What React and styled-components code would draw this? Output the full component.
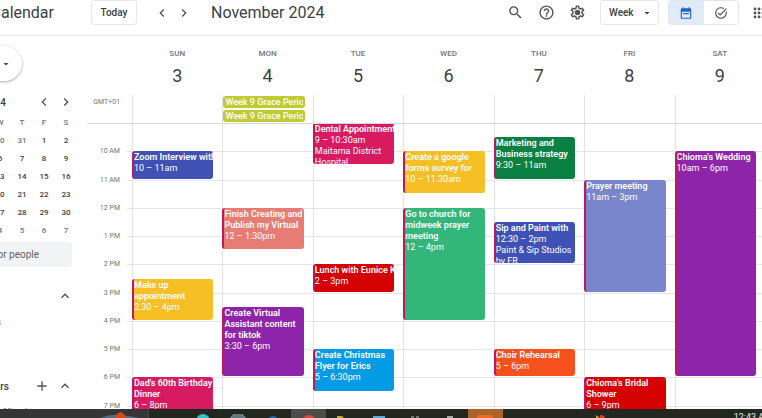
import React from "react";
import styled, { createGlobalStyle } from "styled-components";
import {
  MdAdd,
  MdArrowDropDown,
  MdChevronLeft,
  MdChevronRight,
  MdHelpOutline,
  MdKeyboardArrowUp,
  MdOutlineSettings,
  MdSearch,
  MdTaskAlt,
} from "react-icons/md";

const GlobalStyle = createGlobalStyle`
  *, *::before, *::after { box-sizing: border-box; }
  body {
    margin: 0;
    background: #fff;
    color: #3c4043;
    font-family: Roboto, "Liberation Sans", sans-serif;
    font-size: 9px;
  }
  button, input, select { font: inherit; color: inherit; }
  h1, h2, h3 { margin: 0; font-weight: 400; }
`;

const Page = styled.div`
  display: flex;
  flex-direction: column;
  height: 100vh;
  overflow: hidden;
`;

const Toolbar = styled.header`
  display: flex;
  align-items: center;
  flex: none;
  height: 36px;
  padding-bottom: 10px;
  border-bottom: 1px solid #e4e6e8;
`;

const Brand = styled.div`
  display: flex;
  justify-content: flex-end;
  flex: none;
  width: 54px;
  margin-right: 37px;
  font-size: 16px;
  line-height: 20px;
`;

const OutlineButton = styled.button`
  flex: none;
  width: 46px;
  height: 25px;
  padding: 0;
  border: 1px solid #e4e6e8;
  border-radius: 3px;
  background: #fff;
  font-size: 10px;
  font-weight: 500;
`;

const IconButton = styled.button`
  display: flex;
  align-items: center;
  justify-content: center;
  flex: none;
  width: ${(p) => p.$width || 22}px;
  height: 22px;
  padding: 0;
  border: 0;
  background: none;
  color: #50545a;
  font-size: ${(p) => p.$size || 16}px;
`;

const Pager = styled.div`
  display: flex;
  margin-left: 14px;
`;

const Month = styled.h1`
  flex: 1;
  margin-left: 16px;
  font-size: 16px;
  line-height: 20px;
  white-space: nowrap;
`;

const Tools = styled.div`
  display: flex;
  gap: 9px;
  margin-right: 12px;
`;

const SelectBox = styled.label`
  display: grid;
  grid-template-columns: 1fr 12px;
  align-items: center;
  flex: none;
  width: 59px;
  height: 25px;
  padding-right: 5px;
  border: 1px solid #e4e6e8;
  border-radius: 3px;
  font-size: 12px;

  select {
    grid-area: 1 / 1 / 2 / 3;
    height: 100%;
    padding: 0 0 0 8px;
    border: 0;
    background: none;
    appearance: none;
    font-size: 10px;
    font-weight: 500;
  }
  svg { grid-area: 1 / 2; pointer-events: none; }
`;

const Toggle = styled.div`
  display: flex;
  flex: none;
  width: 71px;
  height: 25px;
  margin: 0 14px 0 9px;
  overflow: hidden;
  border: 1px solid #e4e6e8;
  border-radius: 3px;
`;

const ToggleButton = styled.button`
  display: flex;
  align-items: center;
  justify-content: center;
  flex: 1;
  padding: 0;
  border: 0;
  background: ${(p) => (p.$active ? "#dfeafb" : "#fff")};
  color: ${(p) => (p.$active ? "#1f67c8" : "#50545a")};
  font-size: 14px;
`;

const Apps = styled(IconButton)`
  justify-content: flex-start;
  width: 9px;
  overflow: hidden;
  svg { flex: none; }
`;

const Main = styled.div`
  display: flex;
  flex: 1;
  min-height: 0;
`;

const Sidebar = styled.aside`
  display: flex;
  flex-direction: column;
  flex: none;
  align-items: flex-end;
  width: 77px;
  padding-top: 10px;
  overflow: hidden;
`;

const CreateButton = styled.button`
  display: flex;
  align-items: center;
  justify-content: flex-end;
  flex: none;
  gap: 8px;
  width: 90px;
  height: 35px;
  margin-right: 55px;
  padding: 0 10px 0 0;
  border: 0;
  border-radius: 18px;
  background: #fff;
  box-shadow: 0 1px 3px rgba(60, 64, 67, 0.45);
  font-size: 10px;
  svg { flex: none; font-size: 12px; }
`;

const MiniHeader = styled.div`
  display: flex;
  align-items: center;
  flex: none;
  height: 22px;
  margin-top: 10px;
  color: #3c4043;
  h2 { margin-right: 27px; font-size: 10px; font-weight: 500; white-space: nowrap; }
`;

const MiniMonth = styled.table`
  flex: none;
  width: 154px;
  table-layout: fixed;
  border-collapse: collapse;
  text-align: center;
  font-size: 8px;
  color: #3c4043;
  tr { height: 18px; }
  th, td { padding: 0; font-weight: 500; }
  th { color: #70757a; }
`;

const MiniDay = styled.td`
  color: ${(p) => (p.$muted ? "#70757a" : "#3c4043")};
`;

const PeopleInput = styled.input`
  flex: none;
  width: 154px;
  height: 25px;
  margin: 3px 5px 0 0;
  padding: 0 33px 0 0;
  border: 0;
  border-radius: 3px;
  background: #f1f3f4;
  text-align: right;
  font-size: 10px;
  &::placeholder { color: #5f6368; opacity: 1; }
`;

const ListHeader = styled.div`
  display: flex;
  align-items: center;
  justify-content: flex-end;
  flex: none;
  height: 24px;
  margin-top: ${(p) => p.$gap}px;
  white-space: nowrap;
  h3 { margin-right: ${(p) => p.$titleGap}px; font-size: 10px; font-weight: 500; }
`;

const ListItem = styled.label`
  display: flex;
  align-items: center;
  justify-content: flex-end;
  flex: none;
  gap: 8px;
  margin: ${(p) => p.$gap}px ${(p) => p.$end}px 0 0;
  line-height: 12px;
  font-size: 9px;
  white-space: nowrap;
  input { margin: 0; }
`;

const Week = styled.main`
  display: flex;
  flex-direction: column;
  flex: 1;
  min-width: 0;
  margin: 0 -3px 0 10px;
`;

const WeekRow = styled.div`
  display: grid;
  grid-template-columns: 45px repeat(7, minmax(0, 1fr));
  flex: none;
`;

const DayHead = styled.div`
  padding: 12px 0 8px;
  text-align: center;
  color: #70757a;
  font-size: 8px;
  line-height: 12px;
  font-weight: 500;
`;

const DayNumber = styled.div`
  margin-top: 5px;
  color: #3c4043;
  font-size: 18px;
  line-height: 22px;
  font-weight: 400;
`;

const AllDayRow = styled(WeekRow)`
  height: 29px;
  border-bottom: 1px solid #d5d7da;
`;

const Zone = styled.div`
  padding: 0 12px 0 0;
  text-align: right;
  color: #70757a;
  font-size: 7px;
  line-height: 14px;
`;

const AllDayCell = styled.div`
  display: flex;
  flex-direction: column;
  gap: 2px;
  min-width: 0;
  padding: 1px 8px 0 0;
  border-left: 1px solid #e0e2e5;
`;

const Chip = styled.button`
  flex: none;
  height: 12px;
  padding: 0 2px;
  border: 0;
  border-radius: 3px;
  background: #c0ca33;
  color: #fff;
  overflow: hidden;
  text-align: left;
  font-weight: 500;
  line-height: 12px;
  white-space: nowrap;
  span { display: block; overflow: hidden; }
`;

const Scroller = styled.div`
  flex: 1;
  min-height: 0;
  overflow: hidden;
`;

const Schedule = styled.div`
  display: grid;
  grid-template-columns: 45px repeat(7, minmax(0, 1fr));
  grid-template-rows: repeat(22, minmax(0, 1fr));
  height: 311px;
  margin-top: -1px;
`;

const HourLine = styled.div`
  grid-column: 1 / -1;
  grid-row: ${(p) => p.$row} / span 2;
  margin-left: 40px;
  border-top: 1px solid #e3e5e8;
`;

const HourLabel = styled.div`
  grid-column: 1;
  grid-row: ${(p) => p.$row} / span 2;
  margin-top: -6px;
  padding-right: 12px;
  text-align: right;
  color: #70757a;
  font-size: 7px;
  line-height: 12px;
`;

const DayColumn = styled.div`
  grid-column: ${(p) => p.$day + 2};
  grid-row: 1 / -1;
  border-left: 1px solid #e0e2e5;
`;

const Event = styled.button`
  display: flex;
  flex-direction: column;
  grid-column: ${(p) => p.$day + 2};
  grid-row: ${(p) => p.$from} / ${(p) => p.$to};
  margin: 0 9px 1px 0;
  padding: 1px 0 0;
  overflow: hidden;
  border: 0;
  border-left: 2px solid #c2185b;
  border-radius: 3px;
  background: ${(p) => p.$color};
  color: #fff;
  text-align: left;
  line-height: 11px;
  white-space: pre;
  strong { font-weight: 600; }
`;

const Taskbar = styled.footer`
  display: flex;
  flex: none;
  height: 9px;
  overflow: hidden;
  background: #22271f;
  color: #e8eaed;
`;

const TaskSearch = styled.div`
  flex: none;
  width: 149px;
  background: #343535;
  border-right: 1px solid #474a45;
  padding-left: 98px;
`;

const TaskApps = styled.div`
  display: flex;
  flex: none;
  width: 318px;
  margin-left: 36px;
`;

const TaskApp = styled.div`
  display: flex;
  justify-content: center;
  flex: 1;
  background: ${(p) => p.$bg || "transparent"};
`;

const TaskTray = styled.div`
  display: flex;
  justify-content: space-between;
  flex: 1;
  padding-left: 89px;
`;

const Clock = styled.time`
  margin-right: -10px;
  padding-top: 3px;
  line-height: 10px;
  white-space: nowrap;
`;

const days = [
  ["SUN", 3],
  ["MON", 4],
  ["TUE", 5],
  ["WED", 6],
  ["THU", 7],
  ["FRI", 8],
  ["SAT", 9],
];

const hours = ["10 AM", "11 AM", "12 PM", "1 PM", "2 PM", "3 PM", "4 PM", "5 PM", "6 PM", "7 PM"];

const weeks = [
  [27, 28, 29, 30, 31, 1, 2],
  [3, 4, 5, 6, 7, 8, 9],
  [10, 11, 12, 13, 14, 15, 16],
  [17, 18, 19, 20, 21, 22, 23],
  [24, 25, 26, 27, 28, 29, 30],
  [1, 2, 3, 4, 5, 6, 7],
];

// start and end are hours on a 24-hour clock
const events = [
  { day: 0, start: 10, end: 11, color: "#3f51b5", title: "Zoom Interview with", detail: "10 – 11am" },
  { day: 0, start: 14.5, end: 16, color: "#f6bf26", title: "Make up\nappointment", detail: "2:30 – 4pm" },
  { day: 0, start: 18, end: 20, color: "#d81b60", title: "Dad's 60th Birthday\nDinner", detail: "6 – 8pm" },
  { day: 1, start: 12, end: 13.5, color: "#e67c73", title: "Finish Creating and\nPublish my Virtual", detail: "12 – 1:30pm" },
  { day: 1, start: 15.5, end: 18, color: "#8e24aa", title: "Create Virtual\nAssistant content\nfor tiktok", detail: "3:30 – 6pm" },
  { day: 2, start: 9, end: 10.5, color: "#d81b60", title: "Dental Appointment", detail: "9 – 10:30am\nMaitama District\nHospital" },
  { day: 2, start: 14, end: 15, color: "#d50000", title: "Lunch with Eunice Kalu", detail: "2 – 3pm" },
  { day: 2, start: 17, end: 18.5, color: "#039be5", title: "Create Christmas\nFlyer for Erics", detail: "5 – 6:30pm" },
  { day: 3, start: 10, end: 11.5, color: "#f6bf26", title: "Create a google\nforms survey for", detail: "10 – 11:30am" },
  { day: 3, start: 12, end: 16, color: "#33b679", title: "Go to church for\nmidweek prayer\nmeeting", detail: "12 – 4pm" },
  { day: 4, start: 9.5, end: 11, color: "#0b8043", title: "Marketing and\nBusiness strategy", detail: "9:30 – 11am" },
  { day: 4, start: 12.5, end: 14, color: "#3f51b5", title: "Sip and Paint with", detail: "12:30 – 2pm\nPaint & Sip Studios\nby FR" },
  { day: 4, start: 17, end: 18, color: "#f4511e", title: "Choir Rehearsal", detail: "5 – 6pm" },
  { day: 5, start: 11, end: 15, color: "#7986cb", title: "Prayer meeting", detail: "11am – 3pm" },
  { day: 5, start: 18, end: 20, color: "#d50000", title: "Chioma's Bridal\nShower", detail: "6 – 9pm" },
  { day: 6, start: 10, end: 18, color: "#8e24aa", title: "Chioma's Wedding", detail: "10am – 6pm" },
];

const rowOf = (hour) => (hour - 9) * 2 + 1;

function CalendarIcon() {
  return (
    <svg width="14" height="14" viewBox="0 0 24 24" fill="currentColor" aria-hidden="true">
      <path d="M19 4h-1V2h-2v2H8V2H6v2H5a2 2 0 0 0-2 2v14a2 2 0 0 0 2 2h14a2 2 0 0 0 2-2V6a2 2 0 0 0-2-2zm0 16H5V10h14v10z" />
      <path d="M7 12h10v2H7z" />
    </svg>
  );
}

function GearIcon() {
  return (
    <svg width="17" height="17" viewBox="0 0 24 24" fill="currentColor" aria-hidden="true">
      <MdOutlineSettings size={24} />
      <circle cx="12" cy="12" r="3" />
    </svg>
  );
}

function AppsIcon() {
  return (
    <svg width="14" height="14" viewBox="0 0 14 14" fill="currentColor" aria-hidden="true">
      {[2, 6, 10].map((x) =>
        [3, 7, 11].map((y) => <circle key={`${x}-${y}`} cx={x} cy={y} r="1.4" />)
      )}
    </svg>
  );
}

function TaskIcon({ children, width = 16 }) {
  return (
    <svg width={width} height="9" viewBox={`0 0 ${width} 9`} aria-hidden="true">
      {children}
    </svg>
  );
}

export default function App() {
  return (
    <Page>
      <GlobalStyle />
      <Toolbar>
        <Brand>Calendar</Brand>
        <OutlineButton>Today</OutlineButton>
        <Pager>
          <IconButton aria-label="Previous week"><MdChevronLeft /></IconButton>
          <IconButton aria-label="Next week"><MdChevronRight /></IconButton>
        </Pager>
        <Month>November 2024</Month>
        <Tools>
          <IconButton aria-label="Search" $size={17}><MdSearch /></IconButton>
          <IconButton aria-label="Help" $size={17}><MdHelpOutline /></IconButton>
          <IconButton aria-label="Settings"><GearIcon /></IconButton>
        </Tools>
        <SelectBox>
          <select aria-label="View" defaultValue="Week">
            <option>Day</option>
            <option>Week</option>
            <option>Month</option>
          </select>
          <MdArrowDropDown />
        </SelectBox>
        <Toggle>
          <ToggleButton $active aria-label="Calendar"><CalendarIcon /></ToggleButton>
          <ToggleButton aria-label="Tasks"><MdTaskAlt /></ToggleButton>
        </Toggle>
        <Apps aria-label="Apps"><AppsIcon /></Apps>
      </Toolbar>

      <Main>
        <Sidebar>
          <CreateButton>Create <MdArrowDropDown /></CreateButton>
          <MiniHeader>
            <h2>November 2024</h2>
            <IconButton aria-label="Previous month"><MdChevronLeft /></IconButton>
            <IconButton aria-label="Next month"><MdChevronRight /></IconButton>
          </MiniHeader>
          <MiniMonth>
            <thead>
              <tr>{["S", "M", "T", "W", "T", "F", "S"].map((d, i) => <th key={i}>{d}</th>)}</tr>
            </thead>
            <tbody>
              {weeks.map((week, w) => (
                <tr key={w}>
                  {week.map((d) => (
                    <MiniDay key={d} $muted={(w === 0 && d > 20) || w === 5}>{d}</MiniDay>
                  ))}
                </tr>
              ))}
            </tbody>
          </MiniMonth>
          <PeopleInput aria-label="Search for people" placeholder="Search for people" />
          <ListHeader $gap={17} $titleGap={60}>
            <h3>My calendars</h3>
            <IconButton aria-label="Collapse my calendars" $width={24}><MdKeyboardArrowUp /></IconButton>
          </ListHeader>
          <ListItem $gap={7} $end={76}><input type="checkbox" defaultChecked />Birthdays</ListItem>
          <ListHeader $gap={46} $titleGap={22}>
            <h3>Other calendars</h3>
            <IconButton aria-label="Add calendar"><MdAdd /></IconButton>
            <IconButton aria-label="Collapse other calendars" $width={24}><MdKeyboardArrowUp /></IconButton>
          </ListHeader>
          <ListItem $gap={7} $end={45}><input type="checkbox" />Holidays in Nigeria</ListItem>
        </Sidebar>

        <Week>
          <WeekRow>
            <span />
            {days.map(([name, number]) => (
              <DayHead key={name}>
                {name}
                <DayNumber>{number}</DayNumber>
              </DayHead>
            ))}
          </WeekRow>
          <AllDayRow>
            <Zone>GMT+01</Zone>
            {days.map(([name]) => (
              <AllDayCell key={name}>
                {name === "MON" && (
                  <>
                    <Chip><span>Week 9 Grace Period</span></Chip>
                    <Chip><span>Week 9 Grace Period</span></Chip>
                  </>
                )}
              </AllDayCell>
            ))}
          </AllDayRow>
          <Scroller>
            <Schedule>
              {hours.map((label, i) => (
                <React.Fragment key={label}>
                  <HourLabel $row={rowOf(i + 10)}>{label}</HourLabel>
                  <HourLine $row={rowOf(i + 10)} />
                </React.Fragment>
              ))}
              {days.map(([name], i) => <DayColumn key={name} $day={i} />)}
              {events.map((e) => (
                <Event key={e.title} $day={e.day} $from={rowOf(e.start)} $to={rowOf(e.end)} $color={e.color}>
                  <strong>{e.title}</strong>
                  <span>{e.detail}</span>
                </Event>
              ))}
            </Schedule>
          </Scroller>
        </Week>
      </Main>

      <Taskbar>
        <TaskSearch>
          <TaskIcon width={44}>
            <path d="M2 9Q12 5 22 6t20 3z" fill="#536b7c" />
            <path d="M17 9q1-5 6-6 4 2 5 6z" fill="#d9481c" />
          </TaskIcon>
        </TaskSearch>
        <TaskApps>
          <TaskApp><TaskIcon><circle cx="8" cy="12" r="7" fill="#35bfc4" /></TaskIcon></TaskApp>
          <TaskApp><TaskIcon><path d="M1 9V8h14v1M3 7V6h10v1" stroke="#9cc7d4" fill="none" /></TaskIcon></TaskApp>
          <TaskApp><TaskIcon><circle cx="8" cy="13" r="6" fill="#2169a8" /></TaskIcon></TaskApp>
          <TaskApp $bg="#4b4d48"><TaskIcon><circle cx="8" cy="13" r="7" fill="#d84a3d" /></TaskIcon></TaskApp>
          <TaskApp><TaskIcon><path d="M1 9V7h5l2 2z" fill="#c9a52d" /></TaskIcon></TaskApp>
          <TaskApp><TaskIcon><path d="M2 7h12v2H2z" fill="#5fa8d8" /></TaskIcon></TaskApp>
          <TaskApp><TaskIcon><path d="M4 8h3M9 8h3" stroke="#c5c8c3" /></TaskIcon></TaskApp>
          <TaskApp><TaskIcon><path d="M5 8h6" stroke="#a5a8a3" strokeWidth="2" /></TaskIcon></TaskApp>
          <TaskApp $bg="#a9632b"><TaskIcon><rect y="6" width="16" height="6" rx="2" fill="#ee6a24" /></TaskIcon></TaskApp>
        </TaskApps>
        <TaskTray>
          <TaskIcon>
            <path d="M4 6l4 3H4z" fill="#d99a3a" />
            <path d="M8 9V6l5 1-1 2z" fill="#d8432f" />
          </TaskIcon>
          <Clock>12:43 AM</Clock>
        </TaskTray>
      </Taskbar>
    </Page>
  );
}
